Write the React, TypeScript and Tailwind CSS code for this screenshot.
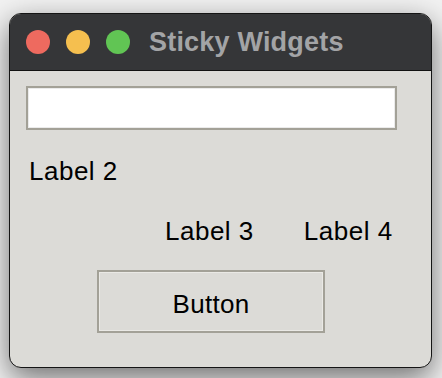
const FONT = { fontFamily: '"Liberation Sans", Arial, sans-serif' };

function TrafficLights() {
  return (
    <div className="flex items-center gap-[16px]">
      <span className="w-[24px] h-[24px] rounded-full bg-[#ee6a5f]" />
      <span className="w-[24px] h-[24px] rounded-full bg-[#f5bf4f]" />
      <span className="w-[24px] h-[24px] rounded-full bg-[#61c554]" />
    </div>
  );
}

export default function App() {
  return (
    <div className="w-[442px] h-[378px] bg-[#f2f2f2] pl-[9px] pt-[13px]" style={FONT}>
      <div className="w-[423px] h-[355px] rounded-[12px] border border-[#151515] overflow-hidden flex flex-col bg-[#dcdbd7] shadow-[0_10px_30px_rgba(0,0,0,0.55)]">
        {/* Title bar */}
        <div className="h-[57px] shrink-0 bg-[#353638] border-b border-[#111111] flex items-center pl-[16px]">
          <TrafficLights />
          <span className="ml-[19px] text-[27px] leading-[27px] font-bold text-[#a3a4a6] tracking-[0.2px]">
            Sticky Widgets
          </span>
        </div>

        {/* Content */}
        <div className="flex-1 flex flex-col pt-[15px] text-black">
          <div className="ml-[16px] w-[371px] h-[44px] bg-white border-2 border-[#a3a197] shadow-[inset_0_0_0_1px_#ebebeb]" />

          <div className="ml-[19px] mt-[29px] text-[26px] leading-[25px] tracking-[0.5px]">Label 2</div>

          <div className="flex mt-[35px] text-[26px] leading-[25px] tracking-[0.5px]">
            <span className="ml-[155px]">Label 3</span>
            <span className="ml-[50px]">Label 4</span>
          </div>

          <div className="ml-[87px] mt-[26px] w-[228px] h-[63px] border-2 border-[#a3a197] shadow-[inset_0_0_0_1px_#eae9e5] flex justify-center pt-[20px] text-[26px] leading-[25px] tracking-[0.3px]">
            Button
          </div>
        </div>
      </div>
    </div>
  );
}
